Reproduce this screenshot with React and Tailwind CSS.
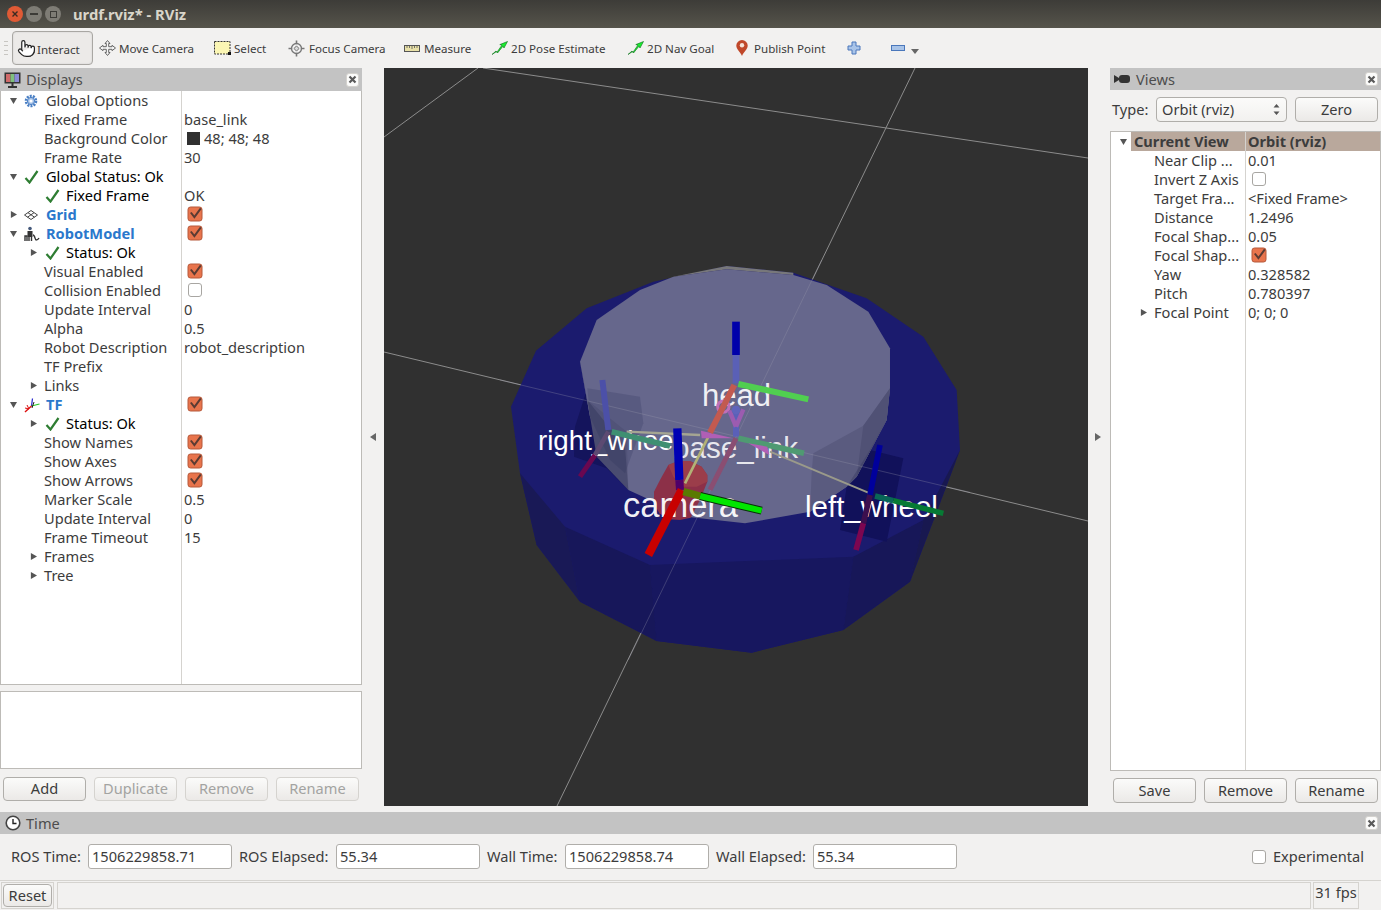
import React from "react";
import { Pointer } from "lucide-react";

const FONT = { fontFamily: '"Noto Sans", "Open Sans", sans-serif' };

function Tri({ open, className = "" }) {
  return (
    <svg width="7" height="7" viewBox="0 0 8 8" className={className}>
      {open ? <path d="M0 1 H8 L4 8 Z" fill="#555" /> : <path d="M1 0 V8 L8 4 Z" fill="#555" />}
    </svg>
  );
}

function Check() {
  return (
    <svg width="16" height="16" viewBox="0 0 16 16">
      <rect x="1" y="1" width="14" height="14" rx="2.5" fill="#e8744c" stroke="#b5583a" />
      <path d="M3.8 6.5 L7.4 11.2 L13.8 2.4" fill="none" stroke="#5b3b33" strokeWidth="2" />
    </svg>
  );
}

function Uncheck() {
  return (
    <svg width="16" height="16" viewBox="0 0 16 16">
      <rect x="1.5" y="1.5" width="13" height="13" rx="2.5" fill="#fff" stroke="#a8a6a2" />
    </svg>
  );
}

function GreenTick() {
  return (
    <svg width="15" height="14" viewBox="0 0 15 14">
      <path d="M1.5 8 L5.5 12.5 L13.5 1" fill="none" stroke="#2e7d32" strokeWidth="2.2" />
    </svg>
  );
}

function Gear() {
  return (
    <svg width="14" height="14" viewBox="0 0 14 14">
      <circle cx="7" cy="7" r="5" fill="none" stroke="#4a7fc4" strokeWidth="2.6" strokeDasharray="2 1.1" />
      <circle cx="7" cy="7" r="3.6" fill="#a9c4e8" stroke="#4a7fc4" />
      <circle cx="7" cy="7" r="1.6" fill="#fff" />
    </svg>
  );
}

function GridIcon() {
  return (
    <svg width="14" height="10" viewBox="0 0 14 10">
      <path d="M7 .5 L13.5 5 L7 9.5 L.5 5 Z M4 2.7 L10.5 7.2 M10 2.7 L3.5 7.2" fill="none" stroke="#444" />
    </svg>
  );
}

function RobotIcon() {
  return (
    <svg width="16" height="16" viewBox="0 0 16 16">
      <circle cx="6" cy="2.5" r="1.8" fill="#44587a" />
      <rect x="3.5" y="5" width="5" height="6" fill="#333" />
      <path d="M1 15 V10 H3 V15 M5 11 V15 M7.5 11 V15 M9 9 C11 9 11 14 12 14 C13 14 14 14 15 12" fill="none" stroke="#333" strokeWidth="1.4" />
    </svg>
  );
}

function TfIcon() {
  return (
    <svg width="17" height="16" viewBox="0 0 17 16">
      <path d="M7.5 9 L8.5 1.5" stroke="#2222cc" strokeWidth="1.2" />
      <path d="M7.5 9 L15.5 7" stroke="#22cc22" strokeWidth="1.2" />
      <path d="M7.5 9 L1 15" stroke="#dd1111" strokeWidth="1.4" />
      <path d="M3 8 L5 12 L1 11" stroke="#dd1111" fill="none" strokeWidth="1" />
      <path d="M10 5 L8 11" stroke="#222" strokeWidth="1" />
    </svg>
  );
}

function CloseBtn() {
  return (
    <div className="flex h-[14px] w-[13px] items-center justify-center rounded-[3px] border border-[#d4d2ce] bg-[#fbfbfa]">
      <svg width="9" height="9" viewBox="0 0 9 9">
        <path d="M1.5 1.5 L7.5 7.5 M7.5 1.5 L1.5 7.5" stroke="#5a5a5a" strokeWidth="2.2" />
      </svg>
    </div>
  );
}

function Row({ kind, name, value, box, icon, bold, dark, tick, arrow }) {
  const left =
    kind === "top"
      ? "pl-[9px]"
      : kind === "prop"
      ? "pl-[43px]"
      : "pl-[29px]";
  return (
    <div className="flex h-[19px] shrink-0">
      <div className={`flex w-[181px] shrink-0 items-center border-r border-[#d5d3cf] ${left}`}>
        {kind !== "prop" && (
          <span className="flex w-[14px] shrink-0 items-center">{arrow !== undefined && <Tri open={arrow} />}</span>
        )}
        {kind === "top" && <span className="flex w-[22px] shrink-0 items-center">{tick ? <GreenTick /> : icon}</span>}
        {kind === "status" && (
          <span className="flex w-[22px] shrink-0 items-center pl-px">
            <GreenTick />
          </span>
        )}
        <span
          className={`whitespace-nowrap ${bold ? "font-bold text-[#2a78cc]" : dark ? "text-black" : "text-[#3c3c3c]"}`}
        >
          {name}
        </span>
      </div>
      <div className="flex items-center whitespace-nowrap pl-[2px] text-[#3c3c3c]">
        {box === 1 && (
          <span className="mb-[1px] ml-[3px]">
            <Check />
          </span>
        )}
        {box === 0 && (
          <span className="mb-[1px] ml-[3px]">
            <Uncheck />
          </span>
        )}
        {value}
      </div>
    </div>
  );
}

function RRow({ name, value, box, arrow }) {
  return (
    <div className="flex h-[19px] shrink-0">
      <div className="flex w-[135px] shrink-0 items-center border-r border-[#d5d3cf] pl-[29px]">
        <span className="flex w-[14px] shrink-0 items-center">{arrow && <Tri />}</span>
        <span className="whitespace-nowrap text-[#3c3c3c]">{name}</span>
      </div>
      <div className="flex items-center whitespace-nowrap pl-[2px] text-[#3c3c3c]">
        {box === 1 && (
          <span className="mb-[1px] ml-[3px]">
            <Check />
          </span>
        )}
        {box === 0 && (
          <span className="mb-[1px] ml-[3px]">
            <Uncheck />
          </span>
        )}
        {value}
      </div>
    </div>
  );
}

function Btn({ children, disabled, small, className = "" }) {
  return (
    <button
      className={`flex ${small ? "h-[24px] pb-[2px]" : "h-[25px]"} w-[83px] items-center justify-center rounded-[4px] border bg-gradient-to-b from-[#fbfbfa] to-[#ebe9e7] ${
        disabled ? "border-[#d5d3cf] text-[#a3a3a1]" : "border-[#b0aeaa] text-[#3c3c3c]"
      } ${className}`}
    >
      {children}
    </button>
  );
}

function ToolItem({ icon, label, iconW, w, className = "" }) {
  return (
    <div className={`flex shrink-0 items-center whitespace-nowrap ${w} ${className}`}>
      <span className={`flex shrink-0 items-center ${iconW}`}>{icon}</span>
      <span className="pt-[1px] text-[11.6px] text-[#3c3c3c]">{label}</span>
    </div>
  );
}

function MoveIcon() {
  return (
    <svg width="17" height="16" viewBox="0 0 17 16">
      <path
        d="M8.5 .5 L11 3.5 H9.7 V6.7 H13 V5.3 L16.5 8 L13 10.7 V9.3 H9.7 V12.5 H11 L8.5 15.5 L6 12.5 H7.3 V9.3 H4 V10.7 L.5 8 L4 5.3 V6.7 H7.3 V3.5 H6 Z"
        fill="#f4f4f4"
        stroke="#666"
      />
    </svg>
  );
}

function SelectIcon() {
  return (
    <svg width="17" height="14" viewBox="0 0 17 14">
      <rect x=".5" y=".5" width="15.5" height="12.5" fill="#fbf6b4" stroke="#333" strokeDasharray="2 1" />
      <rect x="14" y="11" width="3" height="3" fill="#111" />
    </svg>
  );
}

function FocusIcon() {
  return (
    <svg width="17" height="17" viewBox="0 0 17 17">
      <path d="M8.5 .5 V16.5 M.5 8.5 H16.5" stroke="#777" strokeWidth="1.6" />
      <circle cx="8.5" cy="8.5" r="5" fill="#f4f4f4" fillOpacity=".8" stroke="#777" strokeWidth="1.3" />
      <circle cx="8.5" cy="8.5" r="2" fill="#ddd" stroke="#888" />
    </svg>
  );
}

function RulerIcon() {
  return (
    <svg width="16" height="7" viewBox="0 0 16 7">
      <rect x=".5" y=".5" width="15" height="6" fill="#e9e1a8" stroke="#555" />
      <path d="M3 1 V3 M5.5 1 V3 M8 1 V4 M10.5 1 V3 M13 1 V3" stroke="#555" strokeWidth=".8" />
    </svg>
  );
}

function ArrowIcon() {
  return (
    <svg width="17" height="14" viewBox="0 0 17 14">
      <path d="M1 13.5 L5 10 L6 11.2 L11 4 L8.8 3.6 L16.5 .5 L13 7 L12 5.2 L6.5 12 L5.3 10.7 L1 13.5 Z" fill="#19ef2f" stroke="#0b6d1a" strokeWidth=".6" />
    </svg>
  );
}

function PinIcon() {
  return (
    <svg width="12" height="16" viewBox="0 0 12 16">
      <path d="M6 16 C4.5 12 .3 9.5 .3 5.6 A5.7 5.6 0 0 1 11.7 5.6 C11.7 9.5 7.5 12 6 16 Z" fill="#c0482a" />
      <circle cx="6" cy="5.2" r="2.2" fill="#f6e3d8" />
    </svg>
  );
}

function Scene() {
  const L = ({ d, c, w }) => (
    <line x1={d[0]} y1={d[1]} x2={d[2]} y2={d[3]} stroke={c} strokeWidth={w} />
  );
  return (
    <svg viewBox="384 68 704 738" className="block h-full w-full" preserveAspectRatio="none">
      <defs>
        <clipPath id="clipRight">
          <rect x="530" y="400" width="143" height="80" />
        </clipPath>
      </defs>
      <rect x="384" y="68" width="704" height="738" fill="#303030" />
      <g stroke="#8c8c8c" strokeWidth="1" fill="none">
        <line x1="384" y1="137" x2="478" y2="68" />
        <line x1="483" y1="68" x2="1088" y2="158" />
        <line x1="915" y1="68" x2="557" y2="806" />
        <line x1="384" y1="352" x2="1088" y2="521" />
      </g>
      <g transform="translate(500 260) scale(0.33333)">
        <polygon
          points="33,440 108,272 260,145 460,65 680,18 880,38 1100,115 1270,230 1370,390 1380,570 1320,730 1230,965 1030,1110 755,1178 470,1143 240,1025 110,855 60,640"
          fill="#1b1b6e"
        />
        <polygon points="450,915 1060,890 1030,1110 755,1178 470,1143" fill="#17175f" />
        <polygon points="60,640 195,800 240,1025 110,855" fill="#191956" />
        <polygon points="195,800 450,915 470,1143 240,1025" fill="#17175a" />
        <polygon points="1060,890 1270,780 1230,965 1030,1110" fill="#171758" />
        <polygon points="1270,780 1380,570 1320,730 1230,965" fill="#181850" />
        {/* wheel boxes on blue */}
        <polygon points="262,385 225,500 222,590 320,625 385,690 262,420" fill="#14145c" />
        <polygon points="1020,810 1040,680 1110,570 1210,595 1160,845" fill="#11115a" />
        {/* inner cylinder */}
        <polygon
          points="240,305 290,180 420,90 520,50 680,28 880,45 980,75 1105,155 1170,265 1170,385 1160,480 1070,650 1040,680 930,755 735,790 560,770 385,690 270,470"
          fill="#66678c"
        />
        <polygon points="1170,385 1160,480 1070,650 1040,680 930,755 935,640 940,580 1090,497" fill="#5a5b7f" />
        <polygon points="1170,385 1160,480 1070,650 1090,497" fill="#505175" />
        <polygon points="240,305 262,420 380,515 385,690 270,470" fill="#5d5e82" />
        <polygon points="262,420 290,590 385,690 375,560" fill="#4a4c70" />
        <polygon points="262,385 420,410 430,490 375,640 330,600 270,470" fill="#2a2c55" fillOpacity=".22" />
        <polygon points="1040,680 1110,570 1160,480 1070,650" fill="#35365f" fillOpacity=".4" />
        <polygon points="520,50 680,18 880,38 880,45 680,28" fill="#77777a" />
        {/* camera */}
        <polygon
          points="462,695 480,660 505,615 535,603 570,603 605,620 622,645 622,665 600,720 572,773 540,780 505,778 478,760 462,730"
          fill="#8c3048"
        />
        <polygon points="505,615 535,603 570,603 605,620 622,645 622,665 590,680 550,680 520,650" fill="#9b3d4a" />
        {/* faint grid through */}
        <g stroke="#a0a0b0" strokeOpacity=".35" strokeWidth="2.5">
          <line x1="0" y1="360" x2="1410" y2="697" />
          <line x1="965" y1="0" x2="385" y2="1200" />
        </g>
      </g>
      <g fontFamily='"Liberation Sans", Arial, sans-serif' fill="#fff">
        <text x="702" y="406" fontSize="31" fillOpacity=".92">head</text>
        <text x="538" y="450" fontSize="27.7" clipPath="url(#clipRight)">right_wheel</text>
        <text x="673" y="458" fontSize="29.6" fillOpacity=".85">base_link</text>
        <text x="623" y="517" fontSize="34.5" fillOpacity=".95">camera</text>
        <text x="805" y="517" fontSize="29.5">left_wheel</text>
      </g>
      <g transform="translate(500 260) scale(0.33333)" strokeLinecap="butt" fill="none">
        {/* links */}
        <L d={[380, 515, 600, 525]} c="#a5a592" w={7} />
        <L d={[810, 575, 1110, 700]} c="#9a9a8a" w={6} />
        <L d={[630, 520, 555, 670]} c="#b2b276" w={8} />
        {/* right wheel */}
        <L d={[307, 360, 325, 510]} c="#4c50a8" w={18} />
        <L d={[335, 515, 510, 558]} c="#3f8f72" w={17} />
        <L d={[325, 515, 285, 585]} c="#5c4a72" w={14} />
        <L d={[285, 585, 240, 650]} c="#6a0850" w={15} />
        {/* base */}
        <L d={[708, 440, 708, 530]} c="#5a60b8" w={18} />
        <L d={[715, 535, 912, 580]} c="#4f9a72" w={17} />
        <L d={[708, 535, 630, 690]} c="#8a4e72" w={15} />
        {/* pink */}
        <polygon points="603,512 700,535 605,535" fill="#b05fb5" />
        <polygon points="745,550 808,585 802,560" fill="#b05fb5" />
        <circle cx="670" cy="440" r="17" stroke="#c070b8" strokeWidth="9" />
        <L d={[688, 452, 708, 500]} c="#9c5cb0" w={13} />
        <L d={[730, 448, 708, 500]} c="#9c5cb0" w={13} />
        <circle cx="708" cy="450" r="13" fill="#5f64bc" />
        {/* head */}
        <L d={[708, 185, 708, 285]} c="#0000aa" w={23} />
        <L d={[708, 285, 708, 370]} c="#5a60b6" w={20} />
        <L d={[715, 372, 925, 418]} c="#50cf50" w={18} />
        <L d={[703, 375, 630, 518]} c="#c25a50" w={18} />
        {/* camera axes */}
        <L d={[532, 505, 538, 660]} c="#0000b4" w={25} />
        <L d={[538, 660, 540, 690]} c="#50006a" w={24} />
        <L d={[545, 690, 445, 885]} c="#c80000" w={25} />
        <L d={[600, 708, 785, 752]} c="#083008" w={24} />
        <L d={[600, 708, 785, 752]} c="#00e600" w={18} />
        <L d={[550, 695, 600, 708]} c="#5a7a00" w={22} />
        {/* left wheel */}
        <L d={[1140, 555, 1110, 705]} c="#00009c" w={17} />
        <L d={[1110, 705, 1090, 790]} c="#3c0f4e" w={17} />
        <L d={[1090, 790, 1068, 870]} c="#7c0650" w={17} />
        <L d={[1125, 708, 1180, 722]} c="#096657" w={17} />
        <L d={[1180, 722, 1330, 760]} c="#067a34" w={16} />
      </g>
    </svg>
  );
}

export default function App() {
  return (
    <div className="flex h-[910px] w-[1381px] flex-col overflow-hidden bg-[#f2f1f0] text-[14.6px] leading-none" style={FONT}>
      {/* title bar */}
      <div className="flex h-[28px] shrink-0 items-center bg-gradient-to-b from-[#3d3c38] to-[#56544b] pl-[7px]">
        <span className="flex h-[16px] w-[16px] items-center justify-center rounded-full bg-[#e05a35]">
          <svg width="8" height="8" viewBox="0 0 8 8">
            <path d="M1.5 1.5 L6.5 6.5 M6.5 1.5 L1.5 6.5" stroke="#3c2a22" strokeWidth="1.4" />
          </svg>
        </span>
        <span className="ml-[3px] flex h-[16px] w-[16px] items-center justify-center rounded-full bg-[#7e7c75]">
          <span className="h-[2px] w-[8px] bg-[#3c3b37]" />
        </span>
        <span className="ml-[3px] flex h-[16px] w-[16px] items-center justify-center rounded-full bg-[#7e7c75]">
          <span className="h-[7px] w-[7px] border border-[#3c3b37]" />
        </span>
        <span className="ml-[12px] text-[14.8px] font-bold text-[#d9d5c9]">urdf.rviz* - RViz</span>
      </div>

      {/* toolbar */}
      <div className="flex h-[40px] shrink-0 items-center pl-[4px]">
        <div className="flex h-[14px] w-[8px] flex-col justify-between">
          <span className="h-px w-[4px] bg-[#c8c6c2]" />
          <span className="h-px w-[4px] bg-[#c8c6c2]" />
          <span className="h-px w-[4px] bg-[#c8c6c2]" />
          <span className="h-px w-[4px] bg-[#c8c6c2]" />
        </div>
        <div className="flex h-[34px] w-[81px] shrink-0 items-center rounded-[4px] border border-[#a9a7a3] bg-[#eceae8] pl-[4px] shadow-[inset_0_0_2px_#ccc]">
          <span className="flex w-[20px] items-center">
            <Pointer size={19} strokeWidth={1.5} color="#222" fill="#fff" />
          </span>
          <span className="pt-[3px] text-[11.6px] text-[#3c3c3c]">Interact</span>
        </div>
        <ToolItem icon={<MoveIcon />} label="Move Camera" iconW="w-[20px]" w="w-[121px] pl-[6px]" />
        <ToolItem icon={<SelectIcon />} label="Select" iconW="w-[20px]" w="w-[74px]" />
        <ToolItem icon={<FocusIcon />} label="Focus Camera" iconW="w-[21px]" w="w-[116px]" />
        <ToolItem icon={<RulerIcon />} label="Measure" iconW="w-[20px]" w="w-[87px]" />
        <ToolItem icon={<ArrowIcon />} label="2D Pose Estimate" iconW="w-[20px]" w="w-[136px]" />
        <ToolItem icon={<ArrowIcon />} label="2D Nav Goal" iconW="w-[20px]" w="w-[109px]" />
        <ToolItem icon={<PinIcon />} label="Publish Point" iconW="w-[18px]" w="w-[111px]" />
        <svg width="14" height="14" viewBox="0 0 14 14" className="shrink-0">
          <path d="M5 1 H9 V5 H13 V9 H9 V13 H5 V9 H1 V5 H5 Z" fill="#a9c4e8" stroke="#4a77bb" />
        </svg>
        <svg width="14" height="6" viewBox="0 0 14 6" className="ml-[30px] shrink-0">
          <rect x=".5" y=".5" width="13" height="5" fill="#a9c4e8" stroke="#4a77bb" />
        </svg>
        <svg width="8" height="5" viewBox="0 0 8 5" className="ml-[6px] mt-[6px] shrink-0">
          <path d="M0 0 H8 L4 5 Z" fill="#666" />
        </svg>
      </div>

      {/* main */}
      <div className="flex h-[738px] shrink-0">
        {/* left */}
        <div className="flex w-[362px] shrink-0 flex-col">
          <div className="flex h-[23px] shrink-0 items-center justify-between bg-[#c3c3c3] pl-[4px] pr-[3px]">
            <div className="flex items-center">
              <svg width="17" height="16" viewBox="0 0 17 16">
                <rect x=".5" y=".5" width="16" height="11" fill="#333" />
                <rect x="2" y="2" width="4.5" height="8" fill="#d06a6a" />
                <rect x="6.5" y="2" width="4" height="8" fill="#7ec07e" />
                <rect x="10.5" y="2" width="4.5" height="8" fill="#8a8ad8" />
                <path d="M8.5 11 V14 M4 15 H13" stroke="#333" strokeWidth="2" />
              </svg>
              <span className="ml-[5px] text-[#4d4d4d]">Displays</span>
            </div>
            <CloseBtn />
          </div>
          <div className="flex h-[594px] shrink-0 flex-col border-x border-b border-[#bdbbb7] bg-white">
            <Row kind="top" name="Global Options" arrow={true} icon={<Gear />} />
            <Row kind="prop" name="Fixed Frame" value="base_link" />
            <Row
              kind="prop"
              name="Background Color"
              value={
                <span className="flex items-center">
                  <span className="ml-[3px] mr-[4px] h-[13px] w-[13px] bg-[#303030]" />
                  48; 48; 48
                </span>
              }
            />
            <Row kind="prop" name="Frame Rate" value="30" />
            <Row kind="top" name="Global Status: Ok" arrow={true} tick dark />
            <Row kind="status" name="Fixed Frame" value="OK" dark />
            <Row kind="top" name="Grid" arrow={false} icon={<GridIcon />} bold box={1} />
            <Row kind="top" name="RobotModel" arrow={true} icon={<RobotIcon />} bold box={1} />
            <Row kind="status" name="Status: Ok" arrow={false} dark />
            <Row kind="prop" name="Visual Enabled" box={1} />
            <Row kind="prop" name="Collision Enabled" box={0} />
            <Row kind="prop" name="Update Interval" value="0" />
            <Row kind="prop" name="Alpha" value="0.5" />
            <Row kind="prop" name="Robot Description" value="robot_description" />
            <Row kind="prop" name="TF Prefix" />
            <Row kind="sub" name="Links" arrow={false} />
            <Row kind="top" name="TF" arrow={true} icon={<TfIcon />} bold box={1} />
            <Row kind="status" name="Status: Ok" arrow={false} dark />
            <Row kind="prop" name="Show Names" box={1} />
            <Row kind="prop" name="Show Axes" box={1} />
            <Row kind="prop" name="Show Arrows" box={1} />
            <Row kind="prop" name="Marker Scale" value="0.5" />
            <Row kind="prop" name="Update Interval" value="0" />
            <Row kind="prop" name="Frame Timeout" value="15" />
            <Row kind="sub" name="Frames" arrow={false} />
            <Row kind="sub" name="Tree" arrow={false} />
            <div className="w-[181px] flex-1 border-r border-[#d5d3cf]" />
          </div>
          <div className="h-[6px] shrink-0" />
          <div className="h-[78px] shrink-0 border border-[#bdbbb7] bg-white" />
          <div className="mt-[8px] flex gap-[8px] pl-[3px]">
            <Btn small>Add</Btn>
            <Btn small disabled>Duplicate</Btn>
            <Btn small disabled>Remove</Btn>
            <Btn small disabled>Rename</Btn>
          </div>
        </div>

        {/* left splitter */}
        <div className="flex w-[22px] shrink-0 items-center justify-center">
          <svg width="6" height="8" viewBox="0 0 6 8">
            <path d="M6 0 V8 L0 4 Z" fill="#666" />
          </svg>
        </div>

        {/* viewport */}
        <div className="h-full w-[704px] shrink-0">
          <Scene />
        </div>

        {/* right splitter */}
        <div className="flex w-[22px] shrink-0 items-center justify-center pr-[2px]">
          <svg width="6" height="8" viewBox="0 0 6 8">
            <path d="M0 0 V8 L6 4 Z" fill="#666" />
          </svg>
        </div>

        {/* right */}
        <div className="flex w-[271px] shrink-0 flex-col">
          <div className="flex h-[22px] shrink-0 items-center justify-between bg-[#c3c3c3] pl-[4px] pr-[3px]">
            <div className="flex items-center">
              <svg width="16" height="10" viewBox="0 0 16 10">
                <path d="M0 1 L5 4 V6 L0 9 Z" fill="#333" />
                <rect x="5" y="1" width="11" height="8" rx="3" fill="#333" />
              </svg>
              <span className="ml-[6px] text-[#4d4d4d]">Views</span>
            </div>
            <CloseBtn />
          </div>
          <div className="flex h-[41px] shrink-0 items-center pb-[2px] pl-[2px]">
            <span className="w-[44px] text-[#3c3c3c]">Type:</span>
            <div className="flex h-[25px] w-[131px] items-center justify-between rounded-[4px] border border-[#b0aeaa] bg-gradient-to-b from-[#fbfbfa] to-[#f2f1ef] pl-[5px] pr-[6px] text-[#3c3c3c]">
              <span>Orbit (rviz)</span>
              <svg width="7" height="11" viewBox="0 0 7 11">
                <path d="M3.5 0 L6.5 3.5 H.5 Z M3.5 11 L6.5 7.5 H.5 Z" fill="#555" />
              </svg>
            </div>
            <Btn className="ml-[8px]">Zero</Btn>
          </div>
          <div className="flex h-[640px] shrink-0 flex-col border-x border-y border-[#bdbbb7] bg-white">
            <div className="flex h-[19px] shrink-0 font-bold text-[#3c3c3c]">
              <div className="flex w-[20px] shrink-0 items-center pl-[9px]">
                <Tri open />
              </div>
              <div className="flex w-[115px] shrink-0 items-center border-r border-[#d5d3cf] bg-[#b9a89c] pl-[3px]">
                Current View
              </div>
              <div className="flex flex-1 items-center bg-[#b9a89c] pl-[2px]">Orbit (rviz)</div>
            </div>
            <RRow name="Near Clip ..." value="0.01" />
            <RRow name="Invert Z Axis" box={0} />
            <RRow name="Target Fra..." value="<Fixed Frame>" />
            <RRow name="Distance" value="1.2496" />
            <RRow name="Focal Shap..." value="0.05" />
            <RRow name="Focal Shap..." box={1} />
            <RRow name="Yaw" value="0.328582" />
            <RRow name="Pitch" value="0.780397" />
            <RRow name="Focal Point" value="0; 0; 0" arrow />
            <div className="w-[135px] flex-1 border-r border-[#d5d3cf]" />
          </div>
          <div className="mt-[7px] flex gap-[8px] pl-[3px]">
            <Btn>Save</Btn>
            <Btn>Remove</Btn>
            <Btn>Rename</Btn>
          </div>
        </div>
      </div>

      {/* time panel */}
      <div className="mt-[6px] flex h-[22px] shrink-0 items-center justify-between bg-[#c3c3c3] pl-[5px] pr-[3px]">
        <div className="flex items-center">
          <svg width="16" height="16" viewBox="0 0 16 16">
            <circle cx="8" cy="8" r="6.8" fill="#fff" stroke="#444" strokeWidth="1.6" />
            <path d="M8 4 V8.5 H11.5" fill="none" stroke="#222" strokeWidth="1.4" />
          </svg>
          <span className="ml-[5px] text-[#4d4d4d]">Time</span>
        </div>
        <CloseBtn />
      </div>
      <div className="flex h-[46px] shrink-0 items-center pb-[1px] pl-[11px] text-[#3c3c3c]">
        <span className="w-[77px] whitespace-nowrap">ROS Time:</span>
        <div className="flex h-[25px] w-[144px] items-center rounded-[3px] border border-[#b0aeaa] bg-white pl-[3px]">1506229858.71</div>
        <span className="ml-[7px] w-[97px] whitespace-nowrap">ROS Elapsed:</span>
        <div className="flex h-[25px] w-[144px] items-center rounded-[3px] border border-[#b0aeaa] bg-white pl-[3px]">55.34</div>
        <span className="ml-[7px] w-[78px] whitespace-nowrap">Wall Time:</span>
        <div className="flex h-[25px] w-[144px] items-center rounded-[3px] border border-[#b0aeaa] bg-white pl-[3px]">1506229858.74</div>
        <span className="ml-[7px] w-[97px] whitespace-nowrap">Wall Elapsed:</span>
        <div className="flex h-[25px] w-[144px] items-center rounded-[3px] border border-[#b0aeaa] bg-white pl-[3px]">55.34</div>
        <span className="ml-[294px] flex w-[22px] items-center">
          <Uncheck />
        </span>
        <span className="whitespace-nowrap">Experimental</span>
      </div>

      {/* status bar */}
      <div className="flex h-[30px] shrink-0 items-center border-t border-[#d5d3cf] pl-[1px]">
        <div className="flex h-[27px] w-[53px] shrink-0 items-center justify-center border border-[#d5d3cf]">
          <div className="flex h-[23px] w-[49px] items-center justify-center rounded-[4px] border border-[#b0aeaa] bg-gradient-to-b from-[#fbfbfa] to-[#ebe9e7] text-[#3c3c3c]">
            Reset
          </div>
        </div>
        <div className="ml-[3px] h-[27px] w-[1254px] shrink-0 border border-[#d5d3cf]" />
        <div className="ml-[2px] flex h-[27px] w-[46px] shrink-0 items-start justify-center whitespace-nowrap border border-[#d5d3cf] pt-[2px] text-[#3c3c3c]">
          31 fps
        </div>
      </div>
    </div>
  );
}
